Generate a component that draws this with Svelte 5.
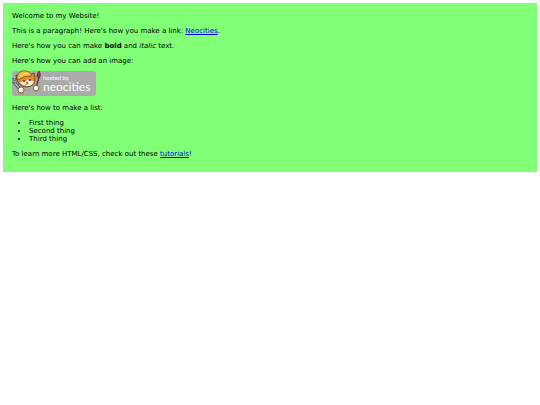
<script lang="ts">
  const things = ['First thing', 'Second thing', 'Third thing'];
</script>

<svelte:head><title>Welcome to my Website!</title></svelte:head>

<main class="page">
  <p>Welcome to my Website!</p>

  <p>This is a paragraph! Here's how you make a link: <a href="https://neocities.org">Neocities</a>.</p>

  <p>Here's how you can make <strong>bold</strong> and <em>italic</em> text.</p>

  <p>Here's how you can add an image:</p>
  <svg class="badge" width="85" height="26" viewBox="0 0 85 26" role="img" aria-label="hosted by neocities">
    <rect y="1" width="84" height="25" rx="3" fill="#aaa" />

    <!-- wrench -->
    <path d="M2 12 L8 19" stroke="#46525a" stroke-width="3.4" stroke-linecap="round" />
    <path d="M2 12 L8 19" stroke="#a9b8bd" stroke-width="1.8" stroke-linecap="round" />
    <path d="M0 12 Q-1 9 1 8 L2 11 L4 10 L3 8 Q7 10 4 13Z" fill="#a9b8bd" stroke="#46525a" stroke-width=".7" />
    <!-- brush -->
    <path d="M27 7 L24 18" stroke="#54352b" stroke-width="1.4" />
    <path d="M25 7 Q25 3 27 1 Q29 4 28 7Z" fill="#b53a32" stroke="#4a2b28" stroke-width=".7" />
    <!-- head -->
    <path d="M5 10 L4 5 L8 6 L20 4 L22 3 L23 8 Q24 16 15 17 Q7 17 5 10Z" fill="#e78a35" stroke="#5f3f16" stroke-width=".9" />
    <path d="M8 13 Q11 10 14 12 L15 9 L17 11 Q20 10 22 12 Q20 16 15 16 Q11 16 8 13Z" fill="#fff2dc" />
    <ellipse cx="12" cy="11" rx=".8" ry="1.1" fill="#332b25" />
    <ellipse cx="18" cy="10" rx=".8" ry="1.1" fill="#332b25" />
    <path d="M14 12 L16 12 L15 13Z M13 14 Q15 15 17 13" fill="#864432" stroke="#864432" stroke-width=".4" />
    <!-- hard hat -->
    <path d="M5 8 Q5 3 10 1 Q16 0 19 4 L20 6 Q13 5 6 10Z" fill="#edbd3e" stroke="#755416" stroke-width=".8" />
    <path d="M8 6 Q11 3 16 3" fill="none" stroke="#ffe076" stroke-width="1" />
    <!-- paws -->
    <circle cx="9" cy="20" r="3" fill="#fff8e5" stroke="#5f4c35" stroke-width=".8" />
    <path d="M7 23 L11 24" stroke="#c9792e" stroke-width="1.4" stroke-linecap="round" />
    <circle cx="24" cy="18" r="2.8" fill="#fff8e5" stroke="#5f4c35" stroke-width=".8" />
    <path d="M23 21 L26 21" stroke="#c9792e" stroke-width="1.2" stroke-linecap="round" />

    <text class="hosted" x="31" y="10">hosted by</text>
    <text class="brand" x="31" y="21">neocities</text>
  </svg>

  <p>Here's how to make a list:</p>

  <ul>
    {#each things as thing}
      <li>{thing}</li>
    {/each}
  </ul>

  <p>To learn more HTML/CSS, check out these <a href="https://neocities.org/tutorials">tutorials</a>!</p>
</main>

<style>
  :global(body) { background: #fff; }

  .page {
    margin: 3px;
    padding: 9px 9px 14px;
    background: #80ff77;
    color: #000;
    font-family: Verdana, "DejaVu Sans", sans-serif;
    font-size: 7px;
    line-height: 8px;
  }

  p { margin: 0 0 7px; }
  p:last-child { margin-bottom: 0; }
  a { color: #0000ee; }

  .badge { display: block; margin: -2px 0 8px; }
  .hosted, .brand { fill: #fff; font-family: Lato, sans-serif; }
  .hosted { font-size: 6px; }
  .brand { font-size: 12px; }

  ul { margin: 0 0 7px; padding-left: 17px; }
</style>
